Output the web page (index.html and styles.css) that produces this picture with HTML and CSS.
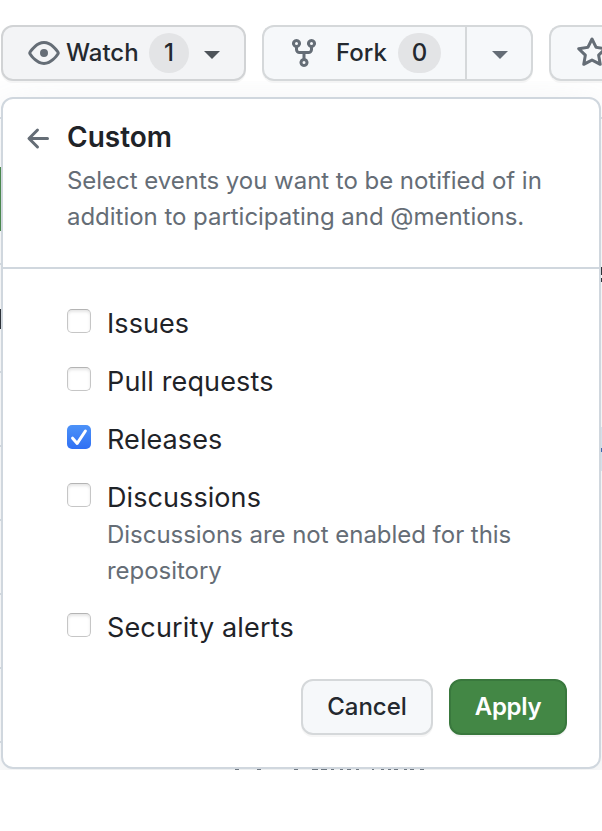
FILE: index.html
```html
<!DOCTYPE html>
<html lang="en">
<head>
<meta charset="utf-8">
<title>Watch notifications</title>
<link rel="stylesheet" href="styles.css">
</head>
<body>
<svg class="backdrop" viewBox="0 0 602 770" aria-hidden="true">
  <path fill="#d8dee4" d="M0 117h1v2H0zM0 263h1v2H0zM0 371h1v2H0zM0 445h1v2H0zM0 519h1v2H0zM0 593h1v2H0zM0 667h1v2H0zM0 741h1v2H0zM601 117h1v2h-1z"/>
  <path fill="#438745" d="M0 167h1v64H0z"/>
  <path fill="#24292f" d="M0 309h1v20H0zM601 267h1v8h-1zM601 278h1v4h-1z"/>
  <path fill="#dde9f3" d="M601 427h1v44h-1z"/>
  <path fill="#3562b0" d="M601 448h1v4h-1z"/>
</svg>
<div class="toolbar">
  <button class="btn watch">
    <svg class="icon" viewBox="0 0 16 16"><path fill-rule="evenodd" d="M1.679 7.932c.412-.621 1.242-1.75 2.366-2.717C5.175 4.242 6.527 3.5 8 3.5c1.473 0 2.824.742 3.955 1.715 1.124.967 1.954 2.096 2.366 2.717a.119.119 0 010 .136c-.412.621-1.242 1.75-2.366 2.717C10.825 11.758 9.473 12.5 8 12.5c-1.473 0-2.824-.742-3.955-1.715C2.92 9.818 2.09 8.69 1.679 8.068a.119.119 0 010-.136zM8 2c-1.981 0-3.67.992-4.933 2.078C1.797 5.169.88 6.423.43 7.1a1.619 1.619 0 000 1.798c.45.678 1.367 1.932 2.637 3.024C4.329 13.008 6.019 14 8 14c1.981 0 3.67-.992 4.933-2.078 1.27-1.091 2.187-2.345 2.637-3.023a1.619 1.619 0 000-1.798c-.45-.678-1.367-1.932-2.637-3.023C11.671 2.992 9.981 2 8 2zm0 8a2 2 0 100-4 2 2 0 000 4z"/></svg>
    <span class="watch-label">Watch</span>
    <span class="counter">1</span>
    <span class="caret"></span>
  </button>
  <div class="split">
    <button class="btn fork">
      <svg class="icon" viewBox="0 0 16 16"><path fill-rule="evenodd" d="M5 3.25a.75.75 0 11-1.5 0 .75.75 0 011.5 0zm0 2.122a2.25 2.25 0 10-1.5 0v.878A2.25 2.25 0 005.75 8.5h1.5v2.128a2.251 2.251 0 101.5 0V8.5h1.5a2.25 2.25 0 002.25-2.25v-.878a2.25 2.25 0 10-1.5 0v.878a.75.75 0 01-.75.75h-4.5A.75.75 0 015 6.25v-.878zm3.75 7.378a.75.75 0 11-1.5 0 .75.75 0 011.5 0zm3-8.75a.75.75 0 100-1.5.75.75 0 000 1.5z"/></svg>
      <span class="fork-label">Fork</span>
      <span class="counter wide">0</span>
    </button>
    <button class="btn fork-menu"><span class="caret muted"></span></button>
  </div>
  <button class="btn star">
    <svg class="icon" viewBox="0 0 16 16"><path fill-rule="evenodd" d="M8 .25a.75.75 0 01.673.418l1.882 3.815 4.21.612a.75.75 0 01.416 1.279l-3.046 2.97.719 4.192a.75.75 0 01-1.088.791L8 12.347l-3.766 1.98a.75.75 0 01-1.088-.79l.72-4.194L.818 6.374a.75.75 0 01.416-1.28l4.21-.611L7.327.668A.75.75 0 018 .25zm0 2.445L6.615 5.5a.75.75 0 01-.564.41l-3.097.45 2.24 2.184a.75.75 0 01.216.664l-.528 3.084 2.769-1.456a.75.75 0 01.698 0l2.77 1.456-.53-3.084a.75.75 0 01.216-.664l2.24-2.183-3.096-.45a.75.75 0 01-.564-.41L8 2.694v.001z"/></svg>
  </button>
</div>
<div class="panel">
  <header class="head">
    <svg class="icon back" viewBox="0 0 16 16"><path fill-rule="evenodd" d="M7.78 12.53a.75.75 0 01-1.06 0L2.47 8.28a.75.75 0 010-1.06l4.25-4.25a.75.75 0 011.06 1.06L4.81 7h7.44a.75.75 0 010 1.5H4.81l2.97 2.97a.75.75 0 010 1.06z"/></svg>
    <div>
      <h1 class="title">Custom</h1>
      <p class="note">Select events you want to be notified of in<br>addition to participating and @mentions.</p>
    </div>
  </header>
  <div class="options">
    <div class="option"><span class="box"></span><span class="name">Issues</span></div>
    <div class="option"><span class="box"></span><span class="name pulls">Pull requests</span></div>
    <div class="option"><span class="box checked"><svg class="tick" viewBox="0 0 24 24"><path d="M5.6 13.2l4.6 5.2L18.4 6"/></svg></span><span class="name">Releases</span></div>
    <div class="option"><span class="box"></span><div><span class="name">Discussions</span><p class="note sub">Discussions are not enabled for this<br>repository</p></div></div>
    <div class="option"><span class="box"></span><span class="name pulls">Security alerts</span></div>
  </div>
  <footer class="actions">
    <button class="btn cancel">Cancel</button>
    <button class="btn apply">Apply</button>
  </footer>
</div>
<svg class="fringe" viewBox="0 0 602 1" aria-hidden="true"><path fill="#6e7781" d="M235 0h4v1h-4zM257 0h4v1h-4zM294 0h4v1h-4zM312 0h6v1h-6zM321 0h6v1h-6zM331 0h3v1h-3zM340 0h3v1h-3zM347 0h4v1h-4zM356 0h3v1h-3zM372 0h2v1h-2zM381 0h3v1h-3zM388 0h3v1h-3zM394 0h4v1h-4zM404 0h3v1h-3zM410 0h4v1h-4zM420 0h4v1h-4z"/></svg>
</body>
</html>
```
FILE: styles.css
```css
* { box-sizing: border-box; }
body {
  margin: 0;
  width: 602px;
  height: 831px;
  overflow: hidden;
  background: #fff;
  color: #1f2328;
  font-family: Inter, "Liberation Sans", sans-serif;
}
h1, p { margin: 0; }
.backdrop { position: absolute; left: 0; top: 0; width: 602px; height: 770px; }
.fringe { display: block; width: 602px; height: 1px; position: relative; }

.toolbar { display: flex; gap: 16px; padding: 25px 0 0 1px; height: 97px; }
.btn {
  display: flex;
  align-items: center;
  flex: none;
  height: 56px;
  margin: 0;
  padding: 0;
  border: 2px solid #d5d8da;
  border-radius: 12px;
  background: #f6f8fa;
  box-shadow: 0 2px 0 rgba(27, 31, 36, .04);
  color: #24292f;
  font: 500 24px/36px Inter, "Liberation Sans", sans-serif;
}
.icon { display: block; flex: none; width: 32px; height: 32px; fill: #656d76; }
.watch { width: 245px; padding-left: 25px; background: #f3f4f6; border-color: #d1d3d5; }
.watch-label { width: 83px; margin-left: 6px; text-align: left; }
.counter {
  flex: none;
  width: 40px;
  height: 40px;
  border-radius: 20px;
  background: #e3e4e6;
  line-height: 40px;
  text-align: center;
}
.counter.wide { width: 43px; }
.caret {
  margin: 3px 0 0 15px;
  border: 8px solid transparent;
  border-top-color: #4d5359;
  border-bottom: 0;
}
.caret.muted { margin-left: 25px; border-top-color: #656d76; }
.split { display: flex; }
.fork { width: 203px; padding-left: 24px; border-right: 0; border-radius: 12px 0 0 12px; }
.fork-label { width: 62px; margin-left: 16px; text-align: left; }
.fork-menu { width: 68px; border-radius: 0 12px 12px 0; }
.star {
  flex: 1;
  min-width: 0;
  overflow: hidden;
  padding-left: 25px;
  border-right: 0;
  border-radius: 12px 0 0 12px;
}

.panel {
  position: relative;
  width: 600px;
  height: 672px;
  margin-left: 1px;
  border: 2px solid #d0d7de;
  border-radius: 12px;
  background: #fff;
  box-shadow: 0 16px 48px rgba(140, 149, 159, .2);
  clip-path: inset(-16px -1px -1px -1px);
}
.head { display: flex; height: 170px; padding: 20px 0 0 20px; border-bottom: 2px solid #d0d7de; }
.back { margin: 4px 12px 0 0; }
.title { font-size: 28px; font-weight: 600; line-height: 36px; }
.note { margin-top: 8px; color: #656d76; font-size: 24px; line-height: 36px; letter-spacing: -.03px; }
.options { padding: 34px 0 0 64px; }
.option { display: flex; margin-bottom: 16px; }
.name { display: block; font-size: 27px; line-height: 42px; letter-spacing: .08px; }
.name.pulls { letter-spacing: .15px; }
.sub { margin: -2px 0 2px; line-height: 36px; }
.box {
  flex: none;
  width: 24px;
  height: 24px;
  margin: 6px 16px 0 0;
  border: 1px solid #c6c6c6;
  border-top-color: #b4b4b4;
  border-radius: 5px;
  background: #fff;
  box-shadow: inset 0 2px 3px rgba(0, 0, 0, .1);
}
.box.checked { border: 0; background: linear-gradient(#4c92f8, #3070f4); box-shadow: none; }
.tick { display: block; width: 24px; height: 24px; fill: none; stroke: #fff; stroke-width: 3; stroke-linecap: round; stroke-linejoin: round; }
.actions { display: flex; justify-content: flex-end; gap: 16px; padding: 14px 32px 0 0; }
.cancel { width: 132px; justify-content: center; }
.apply { width: 118px; justify-content: center; border-color: #39783d; background: #438745; color: #fff; font-weight: 600; letter-spacing: -.3px; }
```
